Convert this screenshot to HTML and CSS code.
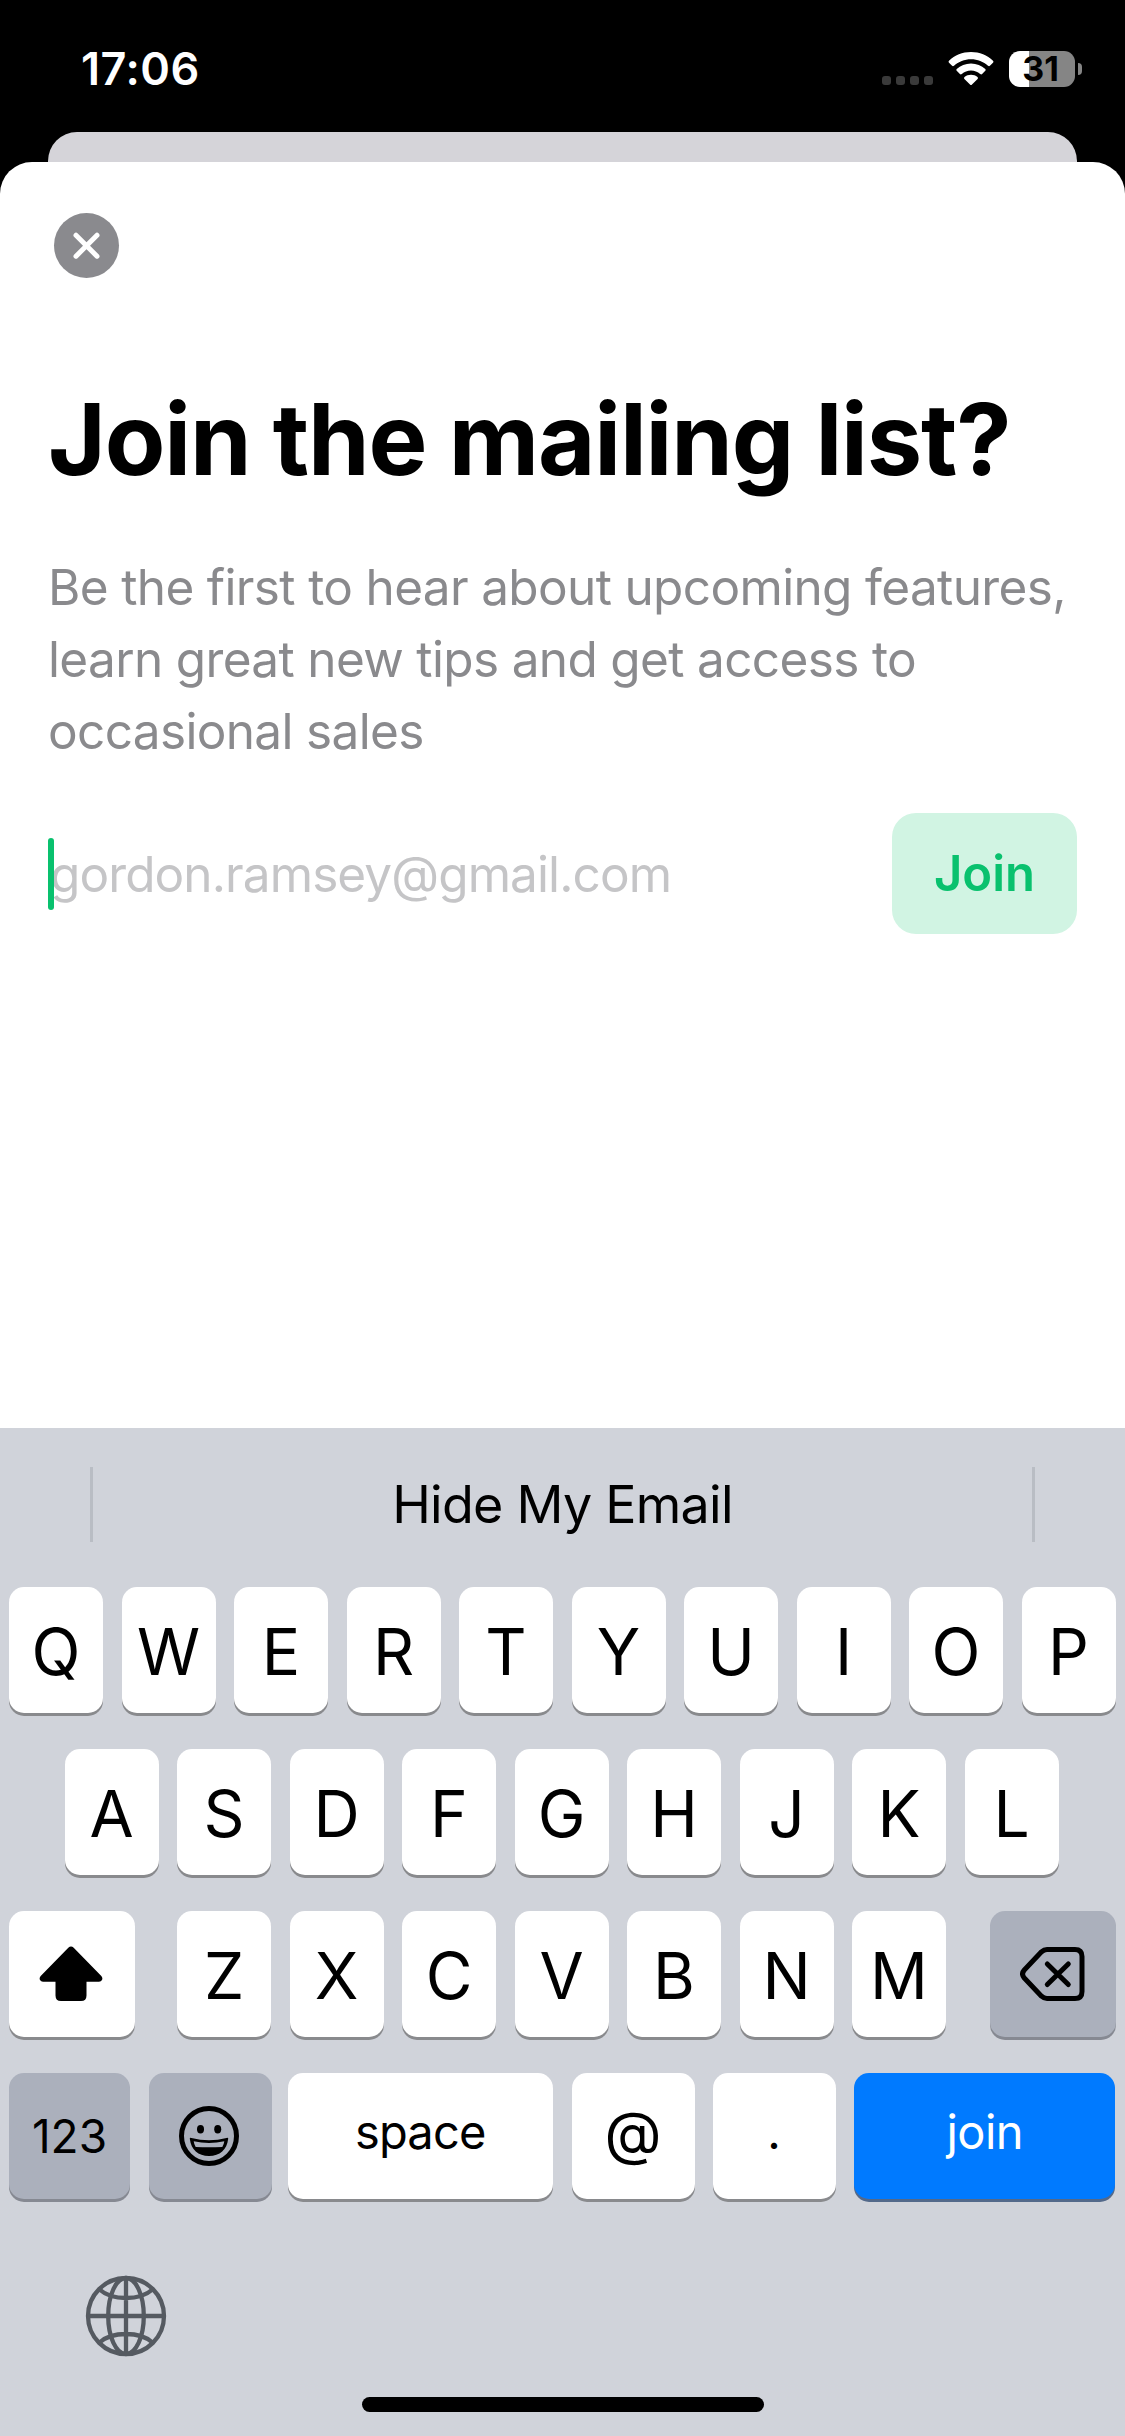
FILE: index.html
```html
<!DOCTYPE html>
<html lang="en">
<head>
<meta charset="utf-8">
<title>Join the mailing list</title>
<link rel="stylesheet" href="styles.css">
</head>
<body>
<div class="screen">
  <header class="status">
    <span class="time">17:06</span>
    <div class="indicators">
      <span class="signal"><i></i><i></i><i></i><i></i></span>
      <svg class="wifi" width="46" height="34" viewBox="0 0 46 34" fill="#fff">
        <path d="M23 0C14.400 0 6.700 3.400 1 8.700Q0 9.700 1 10.700L4.100 13.800Q5 14.600 6 13.700C10.500 9.600 16.500 7.200 23 7.200S35.500 9.600 40 13.700Q41 14.600 41.900 13.800L45 10.700Q46 9.700 45 8.700C39.300 3.400 31.600 0 23 0Z"/>
        <path d="M23 11.400C17.500 11.400 12.500 13.500 8.700 16.900Q7.800 17.800 8.700 18.800L11.900 22Q12.800 22.800 13.800 21.900C16.300 19.800 19.500 18.500 23 18.500S29.700 19.800 32.200 21.900Q33.200 22.800 34.100 22L37.300 18.800Q38.200 17.800 37.300 16.900C33.500 13.500 28.500 11.400 23 11.400Z"/>
        <path d="M23 22.800C20.500 22.800 18.300 23.600 16.500 25Q15.500 25.900 16.400 26.900L22 32.500Q23 33.500 24 32.500L29.600 26.900Q30.500 25.900 29.500 25C27.700 23.600 25.500 22.800 23 22.800Z"/>
      </svg>
      <span class="battery"><b>31</b></span>
      <span class="battery-tip"></span>
    </div>
  </header>
  <div class="card-behind"></div>
  <main class="sheet">
    <button class="close" aria-label="Close">
      <svg width="65" height="65" viewBox="0 0 65 65" stroke="#fff" stroke-width="5" stroke-linecap="round"><path d="M22 22.200L43 43.200M43 22.200L22 43.200"/></svg>
    </button>
    <h1>Join the mailing list?</h1>
    <p class="intro">Be the first to hear about upcoming features,<br>learn great new tips and get access to<br>occasional sales</p>
    <div class="form">
      <div class="field"><i class="caret"></i><span class="placeholder">gordon.ramsey@gmail.com</span></div>
      <button class="submit">Join</button>
    </div>
  </main>
  <section class="keyboard">
    <div class="suggestions"><i></i><span>Hide My Email</span><i></i></div>
    <div class="keys">
      <div class="row">
        <span class="key">Q</span><span class="key">W</span><span class="key">E</span><span class="key">R</span><span class="key">T</span><span class="key">Y</span><span class="key">U</span><span class="key">I</span><span class="key">O</span><span class="key">P</span>
      </div>
      <div class="row home-row">
        <span class="key">A</span><span class="key">S</span><span class="key">D</span><span class="key">F</span><span class="key">G</span><span class="key">H</span><span class="key">J</span><span class="key">K</span><span class="key">L</span>
      </div>
      <div class="row">
        <span class="key shift"><svg width="64" height="56" viewBox="0 0 64 56"><path d="M29.300 1.800Q32 -0.700 34.700 1.800L62.300 30Q64 32 63 34Q62 35.700 60 35.700H47.500V49.500Q47.500 55 42 55H22Q16.500 55 16.500 49.500V35.700H4Q2 35.700 1 34Q0 32 1.700 30Z"/></svg></span>
        <span class="key">Z</span><span class="key">X</span><span class="key">C</span><span class="key">V</span><span class="key">B</span><span class="key">N</span><span class="key">M</span>
        <span class="key dark delete"><svg width="65" height="54" viewBox="0 0 65 54" fill="none" stroke="#000" stroke-width="5" stroke-linecap="round" stroke-linejoin="round"><path d="M27 2.500H55Q62 2.500 62 9.500V44.500Q62 51.500 55 51.500H27Q24 51.500 21.500 49.200L4.300 31Q0.800 27 4.300 23L21.500 4.800Q24 2.500 27 2.500Z"/><path d="M27.300 17L48.300 37.500M48.300 17L27.300 37.500"/></svg></span>
      </div>
      <div class="row bottom-row">
        <span class="key dark num">123</span>
        <span class="key dark emoji"><svg width="60" height="60" viewBox="0 0 60 60"><circle cx="30" cy="30" r="27.500" fill="none" stroke="#000" stroke-width="5"/><ellipse cx="21.500" cy="23.300" rx="3.500" ry="4.200"/><ellipse cx="38.700" cy="23.300" rx="3.500" ry="4.200"/><path fill-rule="evenodd" d="M10.800 32.800Q10.500 31.500 12.500 31.900Q30 36.500 47.500 31.900Q49.500 31.500 49.200 32.800C47.800 44 41 50 30 50S12.200 44 10.800 32.800ZM14.700 35.300Q15.100 38.600 16.700 41Q30 41.700 43.300 41Q44.900 38.600 45.300 35.300Q30 38.800 14.700 35.300Z"/></svg></span>
        <span class="key space">space</span>
        <span class="key at">@</span>
        <span class="key dot">.</span>
        <span class="key go">join</span>
      </div>
    </div>
    <svg class="globe" width="82" height="82" viewBox="0 0 82 82" fill="none" stroke="#555a61" stroke-width="4.300"><circle cx="41" cy="41" r="38"/><ellipse cx="41" cy="41" rx="17.800" ry="38"/><path d="M41 3V79M3 41H79M14.500 14.500Q24 23 41 23T67.500 14.500M14.500 67.500Q24 59 41 59T67.500 67.500"/></svg>
    <div class="home"></div>
  </section>
</div>
</body>
</html>
```

FILE: styles.css
```css
* { box-sizing: border-box; }
body { margin: 0; background: #000; font-family: Inter, "Liberation Sans", sans-serif; color: #000; }
button { border: 0; padding: 0; font: inherit; }
.screen { width: 1125px; height: 2436px; display: flex; flex-direction: column; overflow: hidden; }

.status { height: 132px; flex: none; display: flex; justify-content: space-between; padding: 0 43px 0 81px; color: #fff; }
.time { margin-top: 42px; font-size: 45px; line-height: 54px; font-weight: 580; letter-spacing: 0.5px; }
.indicators { display: flex; padding-top: 51px; }
.signal { display: flex; gap: 5px; padding-top: 25px; }
.signal i { width: 9px; height: 9px; border-radius: 3px; background: #3a3a3a; }
.wifi { margin: 1px 15px 0 15px; }
.battery { width: 66px; height: 36px; padding-right: 3px; border-radius: 11px; background: linear-gradient(90deg, #fff 20px, #858585 20px); color: #000; font-size: 34px; line-height: 36px; text-align: center; }
.battery b { font-weight: 650; }
.battery-tip { width: 4px; height: 12px; margin: 12px 0 0 3px; border-radius: 0 4px 4px 0; background: #858585; }

.card-behind { height: 30px; flex: none; margin: 0 48px; border-radius: 29px 29px 0 0; background: #d5d4d9; }
.sheet { height: 1266px; flex: none; padding: 51px 48px 0; border-radius: 32px 32px 0 0; background: #fff; }
.close { display: block; width: 65px; height: 65px; margin-left: 6px; border-radius: 50%; background: #8a8a8e; }
.close svg { display: block; }
h1 { margin: 101px 0 0; font-size: 99px; line-height: 120px; font-weight: 700; letter-spacing: -1.15px; white-space: nowrap; }
.intro { margin: 52px 0 0; font-size: 49.5px; line-height: 72px; letter-spacing: -0.65px; color: #8a8a8d; white-space: nowrap; }
.form { display: flex; justify-content: space-between; margin-top: 46px; height: 121px; }
.field { position: relative; display: flex; align-items: center; padding-top: 1px; font-size: 49.5px; letter-spacing: -0.9px; color: #c5c5c7; }
.placeholder { margin-left: 2px; }
.caret { position: absolute; left: 0; top: 25px; width: 6px; height: 72px; border-radius: 3px; background: #09c16e; }
.submit { width: 185px; border-radius: 24px; background: #d1f4e3; color: #09c16e; font-size: 49px; font-weight: 600; }

.keyboard { height: 1008px; flex: none; display: flex; flex-direction: column; background: #d0d3da; }
.suggestions { height: 159px; display: flex; justify-content: space-between; padding: 39px 90px 0; font-size: 52px; line-height: 76px; letter-spacing: -0.75px; }
.suggestions i { width: 3px; height: 75px; background: #b9bdc4; }
.keys { display: flex; flex-direction: column; gap: 36px; padding: 0 9px; }
.row { display: flex; gap: 18.5px; }
.home-row { padding-left: 55.5px; }
.bottom-row { gap: 18px; }
.key { flex: none; width: 94px; height: 126px; display: flex; align-items: center; justify-content: center; border-radius: 15px; background: #fff; box-shadow: 0 3px 0 #898a8d; font-size: 64px; padding-top: 3px; }
.dark { background: #abb0bc; box-shadow: 0 3px 0 #868992; }
.shift, .delete { width: 126px; padding: 0; }
.shift { margin-right: 23.5px; padding: 0 2px 1px 0; }
.delete { margin-left: 25px; }
.key.num { width: 121px; font-size: 46px; padding: 0; }
.key.emoji { width: 123px; padding: 0 2px 0 0; margin: 0 -1.5px 0 0.5px; }
.key.space { width: 264.5px; font-size: 47px; letter-spacing: -0.8px; padding: 0 0 9px; }
.key.at { width: 123px; font-size: 59px; font-weight: 400; padding: 0 0 8px; margin-left: 1px; }
.key.dot { width: 123px; font-size: 47px; padding: 0 0 9px; }
.key.go { width: 261.5px; font-size: 47px; letter-spacing: -0.5px; padding: 0 0 9px 1px; background: #007aff; box-shadow: 0 3px 0 #53698a; color: #fff; }
.globe { margin: 76px 0 0 85px; }
.home { width: 402px; height: 15px; margin: 40px auto 0; border-radius: 8px; background: #000; }
```
